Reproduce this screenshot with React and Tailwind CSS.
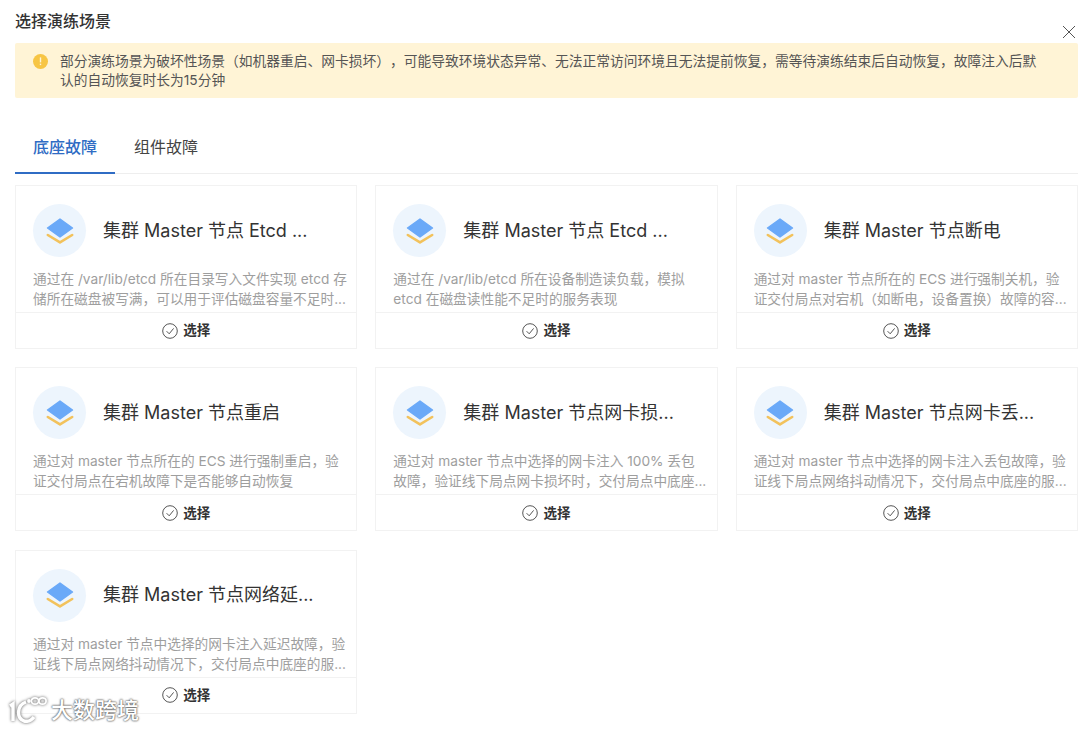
import React from 'react';

const scenes = [
  { title: '集群 Master 节点 Etcd ...', desc: ['通过在 /var/lib/etcd 所在目录写入文件实现 etcd 存', '储所在磁盘被写满，可以用于评估磁盘容量不足时...'] },
  { title: '集群 Master 节点 Etcd ...', desc: ['通过在 /var/lib/etcd 所在设备制造读负载，模拟', 'etcd 在磁盘读性能不足时的服务表现'] },
  { title: '集群 Master 节点断电', desc: ['通过对 master 节点所在的 ECS 进行强制关机，验', '证交付局点对宕机（如断电，设备置换）故障的容...'] },
  { title: '集群 Master 节点重启', desc: ['通过对 master 节点所在的 ECS 进行强制重启，验', '证交付局点在宕机故障下是否能够自动恢复'] },
  { title: '集群 Master 节点网卡损...', desc: ['通过对 master 节点中选择的网卡注入 100% 丢包', '故障，验证线下局点网卡损坏时，交付局点中底座...'] },
  { title: '集群 Master 节点网卡丢...', desc: ['通过对 master 节点中选择的网卡注入丢包故障，验', '证线下局点网络抖动情况下，交付局点中底座的服...'] },
  { title: '集群 Master 节点网络延...', desc: ['通过对 master 节点中选择的网卡注入延迟故障，验', '证线下局点网络抖动情况下，交付局点中底座的服...'] },
];

const LayerIcon = () => (
  <div className="flex h-[53px] w-[53px] shrink-0 items-center justify-center rounded-full bg-[#edf5fd]">
    <svg width="28" height="26" viewBox="0 0 28 26">
      <path d="M1.8 17 L14 24.4 L26.2 17" fill="none" stroke="#f2c25c" strokeWidth="2.6" strokeLinejoin="round" strokeLinecap="round" />
      <path d="M14 1 L26.5 10 L14 19 L1.5 10 Z" fill="#6aa9f8" stroke="#6aa9f8" strokeWidth="1.4" strokeLinejoin="round" />
    </svg>
  </div>
);

const CheckIcon = () => (
  <svg width="16" height="16" viewBox="0 0 16 16" fill="none" stroke="#555" strokeWidth="1">
    <circle cx="8" cy="8" r="7.3" />
    <path d="M4.6 8.2 L7.2 10.8 L11.6 5.4" />
  </svg>
);

const SceneCard = ({ scene }) => (
  <div className="flex h-[164px] flex-col border border-[#f2f2f2] bg-white">
    <div className="flex items-center gap-[17px] px-[17px] pt-[18px]">
      <LayerIcon />
      <div className="text-[18px] leading-[26px] text-[#333]">{scene.title}</div>
    </div>
    <div className="mt-[12px] flex-1 px-[17px] text-[13.7px] leading-[20px] text-[#9e9e9e]">
      {scene.desc.map((line) => (
        <div key={line} className="whitespace-nowrap">{line}</div>
      ))}
    </div>
    <div className="flex h-[36px] items-center justify-center gap-[5px] border-t border-[#f2f2f2] text-[13.5px] font-semibold text-[#333]">
      <CheckIcon />
      <span>选择</span>
    </div>
  </div>
);

const Watermark = () => (
  <div className="absolute left-[9px] top-[696px] flex items-center gap-[4px]">
    <svg width="38" height="27" viewBox="0 0 38 27" fill="none" stroke="#fff" strokeWidth="3.4" style={{ filter: 'drop-shadow(0 0 1.5px #555)' }}>
      <path d="M1 10 L4 8 V25" />
      <path d="M17 6 C8 9 7 22 15 25 C19 26 22 25 25 21" />
      <circle cx="20" cy="5" r="1" strokeWidth="1.8" />
      <ellipse cx="26" cy="5" rx="3.6" ry="3.2" strokeWidth="1.8" />
      <ellipse cx="33.5" cy="5" rx="3.6" ry="3.2" strokeWidth="1.8" />
    </svg>
    <span className="text-[22px] font-medium leading-none text-white [text-shadow:0_0_2px_#555,0_0_2px_#555]">大数跨境</span>
  </div>
);

export default function App() {
  return (
    <div className="relative h-[730px] w-[1080px] overflow-hidden bg-white pl-[15px] pr-[2px] font-['Inter','Noto_Sans_CJK_SC',sans-serif] [text-spacing-trim:space-all]">
      <div className="flex h-[43px] items-start justify-between">
        <div className="pt-[11px] text-[16px] font-medium leading-[20px] text-[#333]">选择演练场景</div>
        <svg width="14" height="14" viewBox="0 0 14 14" fill="none" stroke="#555" strokeWidth="1" className="mr-[2px] mt-[25px]">
          <path d="M1 1 L13 13 M13 1 L1 13" />
        </svg>
      </div>
      <div className="flex h-[55px] gap-[12px] rounded-[2px] bg-[#fff4d6] pl-[18px] pt-[9px] text-[13.75px] leading-[18.6px] text-[#555]">
        <svg width="15" height="15" viewBox="0 0 15 15" className="mt-[2px] shrink-0">
          <circle cx="7.5" cy="7.5" r="7.5" fill="#f7c544" />
          <rect x="6.8" y="3.4" width="1.4" height="5" fill="#fff" opacity="0.8" />
          <rect x="6.8" y="9.6" width="1.4" height="1.5" fill="#fff" opacity="0.8" />
        </svg>
        <div className="w-[985px]">
          <div className="whitespace-nowrap">部分演练场景为破坏性场景（如机器重启、网卡损坏），可能导致环境状态异常、无法正常访问环境且无法提前恢复，需等待演练结束后自动恢复，故障注入后默</div>
          <div>认的自动恢复时长为15分钟</div>
        </div>
      </div>
      <div className="mt-[30px] flex h-[46px] border-b border-[#eeeeee] text-[16px]">
        <div className="-mb-px flex w-[100px] items-start justify-center border-b-2 border-[#2f6cc4] pt-[7px] font-medium text-[#2f6cc4]">底座故障</div>
        <div className="ml-[19px] pt-[7px] text-[#444]">组件故障</div>
      </div>
      <div className="mt-[11px] grid grid-cols-3 gap-x-[18px] gap-y-[18.4px]">
        {scenes.map((scene, i) => (
          <SceneCard key={i} scene={scene} />
        ))}
      </div>
      <Watermark />
    </div>
  );
}
